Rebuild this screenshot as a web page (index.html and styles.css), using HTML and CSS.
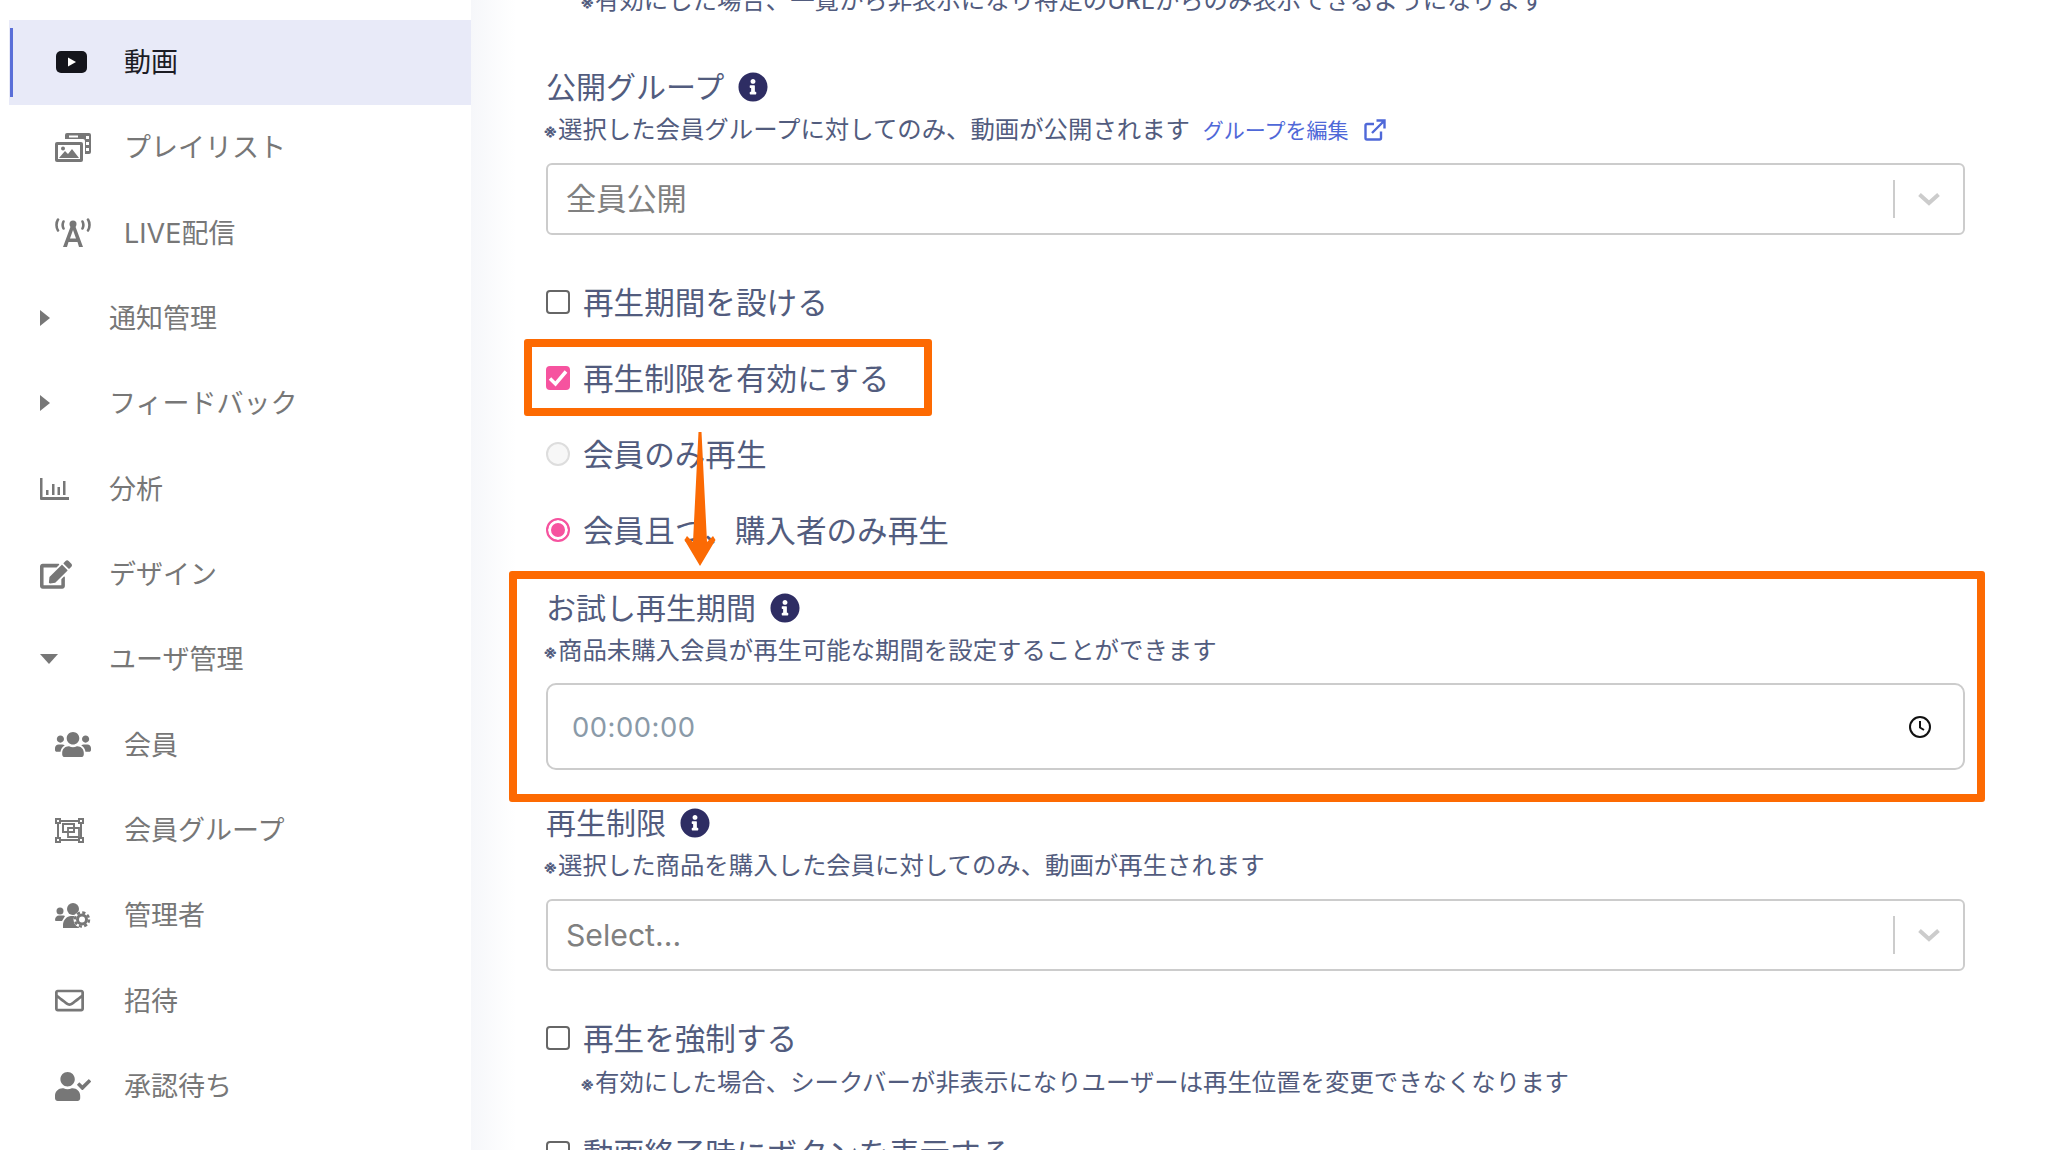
FILE: index.html
```html
<!DOCTYPE html>
<html lang="ja">
<head>
  <meta charset="UTF-8">
  <title>動画設定</title>
  <link rel="stylesheet" href="styles.css">
</head>
<body>
  <div class="page">
    <nav class="sidebar">
      <a class="nav-item sub active">
        <span class="nav-icon">
          <svg class="icon-video" viewBox="0 0 31 22"><rect width="31" height="22" rx="5" fill="#14151c"/><path d="M12 6.5l8 4.5-8 4.5z" fill="#fff"/></svg>
        </span>動画</a>
      <a class="nav-item sub">
        <span class="nav-icon">
          <svg class="icon-wide" viewBox="0 0 36 29"><path d="M10 2a2 2 0 0 1 2-2h22a2 2 0 0 1 2 2v17a2 2 0 0 1-2 2h-4V8a2 2 0 0 0-2-2H10z" fill="#777"/><path d="M2 9h24a2 2 0 0 1 2 2v16a2 2 0 0 1-2 2H2a2 2 0 0 1-2-2V11a2 2 0 0 1 2-2z" fill="#777"/><path d="M3 12h22v14H3z" fill="#fff"/><path d="M4 25l6-7 3 3 4-5 7 9z" fill="#777"/><circle cx="8" cy="15.500" r="2" fill="#777"/><path d="M31 3h3v3h-3zM31 9h3v3h-3zM31 15h3v3h-3zM14 2.500h9v2h-9z" fill="#fff"/></svg>
        </span>プレイリスト</a>
      <a class="nav-item sub">
        <span class="nav-icon">
          <svg class="icon-wide" viewBox="0 0 36 29"><g fill="none" stroke="#777" stroke-width="2.600" stroke-linecap="round"><path d="M3 1.500c-2 3-2 8 0 11M33 1.500c2 3 2 8 0 11M8.500 3.500c-1 2-1 5 0 7M27.500 3.500c1 2 1 5 0 7"/></g><circle cx="18" cy="6" r="3.500" fill="#777"/><path d="M16.500 6h3L28 29h-4l-1.500-5h-9L12 29H8zM15 20.500h6l-3-8.500z" fill="#777"/></svg>
        </span>LIVE配信</a>
      <a class="nav-item">
        <span class="nav-icon"><span class="caret-right"></span></span>通知管理</a>
      <a class="nav-item">
        <span class="nav-icon"><span class="caret-right"></span></span>フィードバック</a>
      <a class="nav-item">
        <span class="nav-icon">
          <svg class="icon-chart" viewBox="0 0 29 22"><path d="M0 0h2.500v19H29v3H1a1 1 0 0 1-1-1z" fill="#777"/><path d="M6 12h2.500v5H6zM12 6h2.500v11H12zM17.500 9H20v8h-2.500zM23 3h2.500v14H23z" fill="#777"/></svg>
        </span>分析</a>
      <a class="nav-item">
        <span class="nav-icon">
          <svg class="icon-edit" viewBox="0 0 576 512"><path fill="#777" d="M402.6 83.2l90.2 90.2c3.8 3.8 3.8 10 0 13.800L274.400 405.600l-92.800 10.300c-12.400 1.400-22.900-9.100-21.500-21.500l10.300-92.800L388.800 83.200c3.800-3.800 10-3.800 13.800 0zm162-22.900l-48.800-48.800c-15.200-15.200-39.900-15.200-55.200 0l-35.400 35.400c-3.800 3.800-3.800 10 0 13.800l90.200 90.200c3.800 3.800 10 3.800 13.800 0l35.400-35.400c15.200-15.300 15.200-40 0-55.200zM384 346.200V448H64V128h229.800c3.200 0 6.200-1.300 8.500-3.500l40-40c7.600-7.600 2.200-20.500-8.500-20.500H48C21.500 64 0 85.500 0 112v352c0 26.500 21.500 48 48 48h352c26.500 0 48-21.500 48-48V306.200c0-10.700-12.900-16-20.500-8.500l-40 40c-2.200 2.300-3.500 5.300-3.500 8.500z"/></svg>
        </span>デザイン</a>
      <a class="nav-item">
        <span class="nav-icon"><span class="caret-down"></span></span>ユーザ管理</a>
      <a class="nav-item sub">
        <span class="nav-icon">
          <svg class="icon-wide" viewBox="0 0 640 512"><path fill="#777" d="M96 224c35.300 0 64-28.700 64-64s-28.700-64-64-64-64 28.700-64 64 28.700 64 64 64zm448 0c35.300 0 64-28.700 64-64s-28.700-64-64-64-64 28.700-64 64 28.700 64 64 64zm32 32h-64c-17.600 0-33.500 7.100-45.100 18.600 40.300 22.100 68.900 62 75.100 109.400h66c17.700 0 32-14.300 32-32v-32c0-35.300-28.700-64-64-64zm-256 0c61.900 0 112-50.100 112-112S381.900 32 320 32 208 82.100 208 144s50.100 112 112 112zm76.800 32h-8.300c-20.800 10-43.900 16-68.500 16s-47.600-6-68.500-16h-8.300C179.600 288 128 339.600 128 403.200V432c0 26.500 21.500 48 48 48h288c26.500 0 48-21.500 48-48v-28.800c0-63.600-51.600-115.200-115.200-115.200zm-223.700-13.400C161.500 263.100 145.600 256 128 256H64c-35.300 0-64 28.700-64 64v32c0 17.700 14.300 32 32 32h65.900c6.300-47.400 34.900-87.300 75.200-109.400z"/></svg>
        </span>会員</a>
      <a class="nav-item sub">
        <span class="nav-icon">
          <svg class="icon-group" viewBox="0 0 29 25"><g fill="none" stroke="#777" stroke-width="2"><path d="M3 3h23v19H3z"/><rect x="1" y="1" width="4" height="4" fill="#fff"/><rect x="24" y="1" width="4" height="4" fill="#fff"/><rect x="1" y="20" width="4" height="4" fill="#fff"/><rect x="24" y="20" width="4" height="4" fill="#fff"/><path d="M8 6h11v8H8z"/><path d="M13 10h11v9H13z" stroke-width="1.800"/></g></svg>
        </span>会員グループ</a>
      <a class="nav-item sub">
        <span class="nav-icon">
          <svg class="icon-wide" viewBox="0 0 36 25"><circle cx="18" cy="6" r="6" fill="#777"/><circle cx="5" cy="8" r="3.500" fill="#777"/><path d="M0 17c0-3 2-4.500 4-4.500h4c1 0 2 .5 2 .5l-3 5H1a1 1 0 0 1-1-1zM8 25v-3c0-5 4-9 8-9h8v12z" fill="#777"/><circle cx="27" cy="16.500" r="8.500" fill="#fff"/><circle cx="27" cy="16.500" r="4.500" fill="none" stroke="#777" stroke-width="3"/><circle cx="27" cy="16.500" r="7" fill="none" stroke="#777" stroke-width="2.500" stroke-dasharray="3.200 2.300"/></svg>
        </span>管理者</a>
      <a class="nav-item sub">
        <span class="nav-icon">
          <svg class="icon-mail" viewBox="0 0 512 512"><path fill="#777" d="M464 64H48C21.490 64 0 85.490 0 112v288c0 26.510 21.490 48 48 48h416c26.510 0 48-21.490 48-48V112c0-26.510-21.490-48-48-48zm0 48v40.805c-22.422 18.259-58.168 46.651-134.587 106.490-16.841 13.247-50.201 45.072-73.413 44.701-23.208.375-56.579-31.459-73.413-44.701C106.180 199.465 70.425 171.067 48 152.805V112h416zM48 400V214.398c22.914 18.251 55.409 43.862 104.938 82.646 21.857 17.205 60.134 55.186 103.062 54.955 42.717.231 80.509-37.199 103.053-54.947 49.528-38.783 82.032-64.401 104.947-82.653V400H48z"/></svg>
        </span>招待</a>
      <a class="nav-item sub">
        <span class="nav-icon">
          <svg class="icon-wide" viewBox="0 0 640 512"><path fill="#777" d="M224 256c70.700 0 128-57.300 128-128S294.700 0 224 0 96 57.300 96 128s57.300 128 128 128zm89.600 32h-16.700c-22.200 10.200-46.900 16-72.900 16s-50.600-5.800-72.900-16h-16.700C60.200 288 0 348.200 0 422.400V464c0 26.500 21.500 48 48 48h352c26.500 0 48-21.500 48-48v-41.600c0-74.200-60.200-134.400-134.400-134.400zm323-128.400l-27.800-28.100c-4.600-4.700-12.100-4.700-16.800-.1l-104.800 104-45.500-45.800c-4.600-4.700-12.100-4.700-16.800-.1l-28.100 27.900c-4.700 4.600-4.700 12.100-.1 16.800l81.700 82.300c4.600 4.700 12.100 4.700 16.800.1l141.300-140.200c4.600-4.700 4.700-12.200.1-16.800z"/></svg>
        </span>承認待ち</a>
    </nav>

    <main class="content">
      <p class="hint indented first"><span class="mark">※</span>有効にした場合、一覧から非表示になり特定のURLからのみ表示できるようになります</p>

      <div class="field-label group-top">公開グループ
        <svg class="info" viewBox="0 0 512 512"><path fill="#2e2d63" d="M256 8C119.043 8 8 119.083 8 256c0 136.997 111.043 248 248 248s248-111.003 248-248C504 119.083 392.957 8 256 8zm0 110c23.196 0 42 18.804 42 42s-18.804 42-42 42-42-18.804-42-42 18.804-42 42-42zm56 254c0 6.627-5.373 12-12 12h-88c-6.627 0-12-5.373-12-12v-24c0-6.627 5.373-12 12-12h12v-64h-12c-6.627 0-12-5.373-12-12v-24c0-6.627 5.373-12 12-12h64c6.627 0 12 5.373 12 12v100h12c6.627 0 12 5.373 12 12v24z"/></svg>
      </div>
      <p class="hint"><span class="mark">※</span>選択した会員グループに対してのみ、動画が公開されます
        <a class="edit-link">グループを編集
          <svg class="ext" viewBox="0 0 22 22"><path d="M17 12.500V19a1.500 1.500 0 0 1-1.500 1.500H3A1.500 1.500 0 0 1 1.500 19V6.500A1.500 1.500 0 0 1 3 5h7" fill="none" stroke="#4f68d8" stroke-width="2.400"/><path d="M8 14L20 2M12.500 1.500h8v8" fill="none" stroke="#4f68d8" stroke-width="2.400"/></svg>
        </a>
      </p>
      <div class="select">
        <span class="select-value jp">全員公開</span>
        <span class="select-arrow"><svg viewBox="0 0 22 14"><path d="M1.500 2.500L11 11l9.500-8.500" fill="none" stroke="#ccc" stroke-width="4"/></svg></span>
      </div>

      <div class="checks">
        <div class="check"><span class="box"></span>再生期間を設ける</div>
        <div class="check"><span class="box on"><svg viewBox="0 0 24 24"><path d="M4 12.500l5.500 5.500L20 5.500" fill="none" stroke="#fff" stroke-width="3.500"/></svg></span>再生制限を有効にする</div>
        <div class="check"><span class="radio"></span>会員のみ再生</div>
        <div class="check"><span class="radio on"></span>会員且つ、購入者のみ再生</div>
      </div>

      <div class="field-label trial-top">お試し再生期間
        <svg class="info" viewBox="0 0 512 512"><path fill="#2e2d63" d="M256 8C119.043 8 8 119.083 8 256c0 136.997 111.043 248 248 248s248-111.003 248-248C504 119.083 392.957 8 256 8zm0 110c23.196 0 42 18.804 42 42s-18.804 42-42 42-42-18.804-42-42 18.804-42 42-42zm56 254c0 6.627-5.373 12-12 12h-88c-6.627 0-12-5.373-12-12v-24c0-6.627 5.373-12 12-12h12v-64h-12c-6.627 0-12-5.373-12-12v-24c0-6.627 5.373-12 12-12h64c6.627 0 12 5.373 12 12v100h12c6.627 0 12 5.373 12 12v24z"/></svg>
      </div>
      <p class="hint"><span class="mark">※</span>商品未購入会員が再生可能な期間を設定することができます</p>
      <div class="time-input">
        <span class="placeholder">00:00:00</span>
        <svg class="clock" viewBox="0 0 24 24"><circle cx="12" cy="12" r="10" fill="none" stroke="#111" stroke-width="2"/><path d="M12 6v6.500l4 2.500" fill="none" stroke="#111" stroke-width="2"/></svg>
      </div>

      <div class="field-label limit-top">再生制限
        <svg class="info" viewBox="0 0 512 512"><path fill="#2e2d63" d="M256 8C119.043 8 8 119.083 8 256c0 136.997 111.043 248 248 248s248-111.003 248-248C504 119.083 392.957 8 256 8zm0 110c23.196 0 42 18.804 42 42s-18.804 42-42 42-42-18.804-42-42 18.804-42 42-42zm56 254c0 6.627-5.373 12-12 12h-88c-6.627 0-12-5.373-12-12v-24c0-6.627 5.373-12 12-12h12v-64h-12c-6.627 0-12-5.373-12-12v-24c0-6.627 5.373-12 12-12h64c6.627 0 12 5.373 12 12v100h12c6.627 0 12 5.373 12 12v24z"/></svg>
      </div>
      <p class="hint"><span class="mark">※</span>選択した商品を購入した会員に対してのみ、動画が再生されます</p>
      <div class="select">
        <span class="select-value">Select...</span>
        <span class="select-arrow"><svg viewBox="0 0 22 14"><path d="M1.500 2.500L11 11l9.500-8.500" fill="none" stroke="#ccc" stroke-width="4"/></svg></span>
      </div>

      <div class="check force-top"><span class="box"></span>再生を強制する</div>
      <p class="hint indented"><span class="mark">※</span>有効にした場合、シークバーが非表示になりユーザーは再生位置を変更できなくなります</p>
      <div class="check end-top"><span class="box"></span>動画終了時にボタンを表示する</div>

      <!-- annotations drawn over the form -->
      <div class="callout callout-check"></div>
      <div class="callout callout-trial"></div>
      <svg class="callout-arrow" viewBox="0 0 32 134"><path d="M14.500 0h3L23 110l6-6 2.500 4L16 134 .5 108l2.500-4 6 6z" fill="#fb6a04"/></svg>
    </main>
  </div>
</body>
</html>
```

FILE: styles.css
```css
* {
  box-sizing: border-box;
}
html, body {
  margin: 0;
  background: #fff;
}
body {
  font-family: Inter, "Noto Sans CJK JP", sans-serif;
}
p {
  margin: 0;
}
.page {
  display: flex;
  height: 1150px;
  overflow: hidden;
}

/* sidebar */
.sidebar {
  flex: 0 0 471px;
  padding: 19.5px 0 0 9px;
  background: #fff;
}
.nav-item {
  position: relative;
  display: flex;
  align-items: center;
  height: 85.33px;
  padding: 0 0 3px 31px;
  font-size: 27px;
  color: #777;
}
.nav-item.sub {
  padding-left: 46px;
}
.nav-icon {
  display: flex;
  align-items: center;
  flex: 0 0 69px;
  margin-top: 3px;
}
.nav-item.active {
  background: #e8eaf8;
  color: #1b1c24;
}
.nav-item.active::before {
  content: "";
  position: absolute;
  left: 1px;
  top: 8px;
  bottom: 8px;
  width: 3px;
  background: #5a6fd8;
}
.icon-video {
  width: 31px;
  height: 22px;
  margin-left: 1px;
}
.icon-wide {
  width: 36px;
  height: 29px;
}
.icon-chart {
  width: 29px;
  height: 22px;
}
.icon-edit {
  width: 32px;
  height: 29px;
}
.icon-group {
  width: 29px;
  height: 25px;
}
.icon-mail {
  width: 29px;
  height: 29px;
}
.caret-right {
  border-left: 10px solid #777;
  border-top: 8px solid transparent;
  border-bottom: 8px solid transparent;
}
.caret-down {
  border-top: 10px solid #777;
  border-left: 9px solid transparent;
  border-right: 9px solid transparent;
}

/* form column */
.content {
  position: relative;
  flex: 1;
  padding: 0 83px 0 75px;
  color: #525c7e;
  background: linear-gradient(90deg, #f6f7fa, #fff 45px);
}
.field-label {
  display: flex;
  align-items: center;
  gap: 14px;
  height: 40px;
  padding-bottom: 5px;
  font-size: 30px;
}
.info {
  width: 30px;
  height: 30px;
  margin-top: 5px;
}
.group-top {
  margin-top: 55px;
}
.trial-top {
  margin-top: 37px;
}
.limit-top {
  margin-top: 33px;
}
.hint {
  margin-top: 7px;
  height: 30px;
  font-size: 24.4px;
  line-height: 30px;
  white-space: nowrap;
}
.hint.first {
  margin-top: -12px;
  margin-left: 37px;
  height: 24px;
  line-height: 24px;
}
.hint.indented {
  margin-left: 37px;
}
.mark {
  display: inline-block;
  width: 12px;
  font-size: 18px;
  font-weight: 700;
  text-indent: -3px;
}
.edit-link {
  margin-left: 6px;
  font-size: 21px;
  color: #4f68d8;
}
.ext {
  width: 22px;
  height: 22px;
  margin-left: 10px;
  vertical-align: -3px;
}

/* inputs */
.select {
  display: flex;
  align-items: center;
  justify-content: space-between;
  height: 72px;
  margin-top: 19px;
  padding-left: 18px;
  border: 2px solid #ccc;
  border-radius: 6px;
  background: #fff;
}
.select-value {
  font-size: 30.2px;
  color: #808080;
}
.select-value.jp {
  padding-bottom: 5px;
}
.select-arrow {
  display: flex;
  align-items: center;
  justify-content: center;
  width: 70px;
  height: 38px;
  border-left: 2px solid #ccc;
}
.select-arrow svg {
  width: 22px;
  height: 14px;
}
.time-input {
  display: flex;
  align-items: center;
  justify-content: space-between;
  height: 87px;
  margin-top: 18px;
  padding: 0 31px 0 24px;
  border: 2px solid #ccc;
  border-radius: 10px;
  background: #fff;
}
.placeholder {
  font-size: 27.4px;
  letter-spacing: .5px;
  color: #8a9aa8;
}
.clock {
  width: 24px;
  height: 24px;
}

/* checks and radios */
.checks {
  display: flex;
  flex-direction: column;
  gap: 36px;
  margin-top: 48px;
}
.check {
  display: flex;
  align-items: center;
  gap: 13px;
  height: 40px;
  padding-bottom: 5px;
  font-size: 30.6px;
  white-space: nowrap;
}
.force-top {
  margin-top: 48px;
}
.force-top + .hint {
  margin-top: 8px;
}
.end-top {
  margin-top: 37px;
}
.box, .radio {
  flex: 0 0 24px;
  width: 24px;
  height: 24px;
  margin-top: 3px;
}
.box {
  border: 2px solid #666;
  border-radius: 4px;
}
.box.on {
  border: 0;
  background: #f6539f;
}
.box svg {
  display: block;
}
.radio {
  border: 2px solid #ddd;
  border-radius: 50%;
  background: #f7f7f7;
}
.radio.on {
  border-color: #f6539f;
  background: #f6539f;
  box-shadow: inset 0 0 0 3px #fff;
}

/* orange annotations */
.callout {
  position: absolute;
  border: 8px solid #fd6a02;
  border-radius: 3px;
}
.callout-check {
  left: 53px;
  top: 339px;
  width: 408px;
  height: 77px;
}
.callout-trial {
  left: 38px;
  top: 571px;
  width: 1476px;
  height: 231px;
}
.callout-arrow {
  position: absolute;
  left: 213px;
  top: 432px;
  width: 32px;
  height: 134px;
}
```
